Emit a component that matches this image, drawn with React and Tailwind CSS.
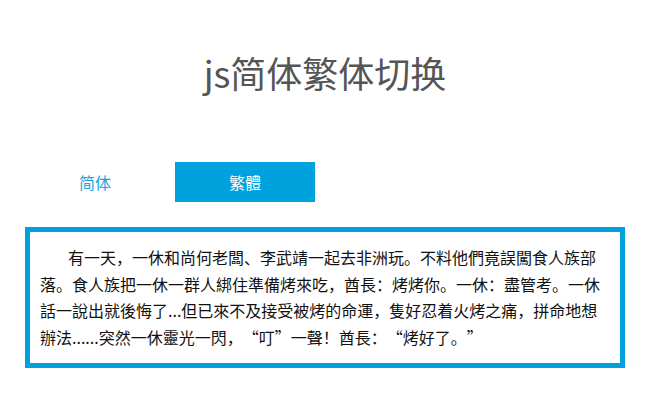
import React, { useState } from 'react';

// quotes take a full em in the reference
const Open = () => <span className="inline-block w-[1em] indent-0 text-right">“</span>;
const Close = () => <span className="inline-block w-[1em] indent-0 text-left">”</span>;

const TextTC = () => (
    <>
        有一天，一休和尚何老闆、李武靖一起去非洲玩。不料他們竟誤闖食人族部落。食人族把一休一群人綁住準備烤來吃，酋長：烤烤你。一休：盡管考。一休話一說出就後悔了...但已來不及接受被烤的命運，隻好忍着火烤之痛，拼命地想辦法......突然一休靈光一閃，<Open />叮<Close />一聲！酋長：<Open />烤好了。<Close />
    </>
);

const TextSC = () => (
    <>
        有一天，一休和尚何老板、李武靖一起去非洲玩。不料他们竟误闯食人族部落。食人族把一休一群人绑住准备烤来吃，酋长：烤烤你。一休：尽管考。一休话一说出就后悔了...但已来不及接受被烤的命运，只好忍着火烤之痛，拼命地想办法......突然一休灵光一闪，<Open />叮<Close />一声！酋长：<Open />烤好了。<Close />
    </>
);

const App = () => {
    const [mode, setMode] = useState('tc');

    return (
        <div className="w-[650px] h-[400px] bg-white font-['Noto_Sans_CJK_SC','Noto_Sans_CJK_TC',sans-serif]">
            <h1 className="pt-[45px] text-center text-[36px] leading-[54px] font-normal text-[#555]">js简体繁体切换</h1>

            <div className="mx-[25px] mt-[63px]">
                {/* tabs */}
                <div className="flex gap-[10px]">
                    <button
                        onClick={() => setMode('sc')}
                        className={`w-[140px] h-[40px] text-[16px] ${mode === 'sc' ? 'bg-[#00a2de] text-white' : 'bg-white text-[#1aa3e0]'}`}
                    >
                        简体
                    </button>
                    <button
                        onClick={() => setMode('tc')}
                        className={`w-[140px] h-[40px] text-[16px] ${mode === 'tc' ? 'bg-[#00a2de] text-white' : 'bg-white text-[#1aa3e0]'}`}
                    >
                        繁體
                    </button>
                </div>

                {/* content */}
                <div className="mt-[25px] border-[5px] border-[#00a2de] px-[10px] pt-[12px] pb-[13px]">
                    <p className="text-[16px] leading-[26.5px] indent-[28px] text-[#111]">
                        {mode === 'tc' ? <TextTC /> : <TextSC />}
                    </p>
                </div>
            </div>
        </div>
    );
};

export default App;
